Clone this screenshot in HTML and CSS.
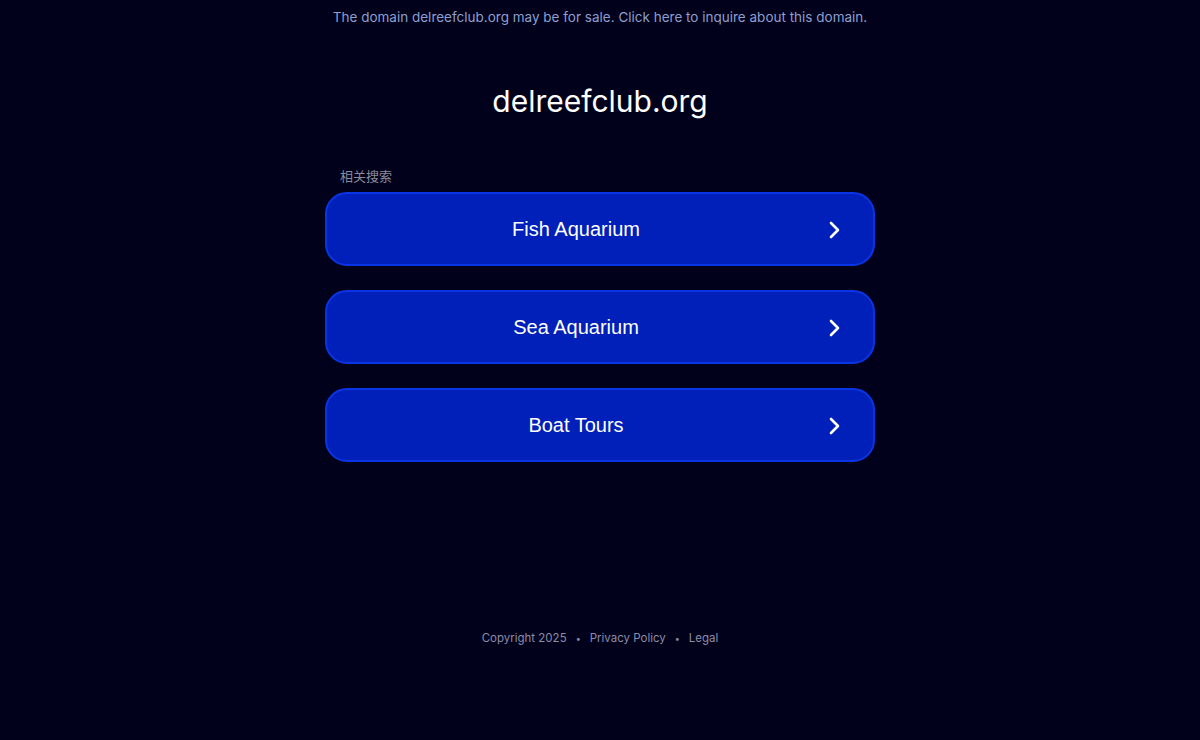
FILE: index.html
```html
<!DOCTYPE html>
<html lang="en">
<head>
<meta charset="utf-8">
<title>delreefclub.org</title>
<link rel="stylesheet" href="styles.css">
</head>
<body>
<div class="page">
  <div class="banner">The domain delreefclub.org may be for sale. Click here to inquire about this domain.</div>
  <h1 class="domain">delreefclub.org</h1>
  <div class="related">
    <div class="related-title">相关搜索</div>
    <a class="link" href="#"><span class="link-text">Fish Aquarium</span><svg class="chev" viewBox="0 0 24 24" width="24" height="24"><path d="M9 5l7 7-7 7" fill="none" stroke="#fff" stroke-width="2.6" stroke-linecap="round" stroke-linejoin="round"/></svg></a>
    <a class="link" href="#"><span class="link-text">Sea Aquarium</span><svg class="chev" viewBox="0 0 24 24" width="24" height="24"><path d="M9 5l7 7-7 7" fill="none" stroke="#fff" stroke-width="2.6" stroke-linecap="round" stroke-linejoin="round"/></svg></a>
    <a class="link" href="#"><span class="link-text">Boat Tours</span><svg class="chev" viewBox="0 0 24 24" width="24" height="24"><path d="M9 5l7 7-7 7" fill="none" stroke="#fff" stroke-width="2.6" stroke-linecap="round" stroke-linejoin="round"/></svg></a>
  </div>
  <div class="footer">
    <span>Copyright 2025</span><span class="dot">•</span><a href="#">Privacy Policy</a><span class="dot">•</span><a href="#">Legal</a>
  </div>
</div>
</body>
</html>
```
FILE: styles.css
```css
html, body {
  margin: 0;
  padding: 0;
  background: #01011c;
  height: 100%;
}
body {
  font-family: Inter, "Liberation Sans", sans-serif;
}
.page {
  display: flex;
  flex-direction: column;
  align-items: center;
}
.banner {
  margin-top: 9px;
  font-size: 13.5px;
  line-height: 16px;
  color: #8d9fcf;
}
.domain {
  margin: 57px 0 0;
  font-size: 30px;
  font-weight: 400;
  line-height: 38px;
  color: #ffffff;
}
.related {
  margin-top: 48px;
  width: 550px;
  display: flex;
  flex-direction: column;
  gap: 24px;
}
.related-title {
  margin: 0 0 -16px 15px;
  font-family: "Noto Sans CJK SC", sans-serif;
  font-size: 13px;
  line-height: 16px;
  color: #8a8a99;
}
.link {
  box-sizing: border-box;
  height: 74px;
  padding-right: 48px;
  display: flex;
  align-items: center;
  justify-content: center;
  position: relative;
  background: #0020b9;
  border: 2px solid #0a35e6;
  border-radius: 22px;
  text-decoration: none;
  color: #ffffff;
}
.link-text {
  font-family: "Liberation Sans", Arial, sans-serif;
  font-size: 20px;
  line-height: 24px;
}
.chev {
  position: absolute;
  right: 27px;
  top: 24px;
}
.footer {
  margin-top: 169px;
  display: flex;
  align-items: center;
  font-size: 11.5px;
  color: #8c8ca8;
}
.footer a {
  color: #8c8ca8;
  text-decoration: none;
}
.dot {
  margin: 0 9px;
  font-size: 9px;
}
```
